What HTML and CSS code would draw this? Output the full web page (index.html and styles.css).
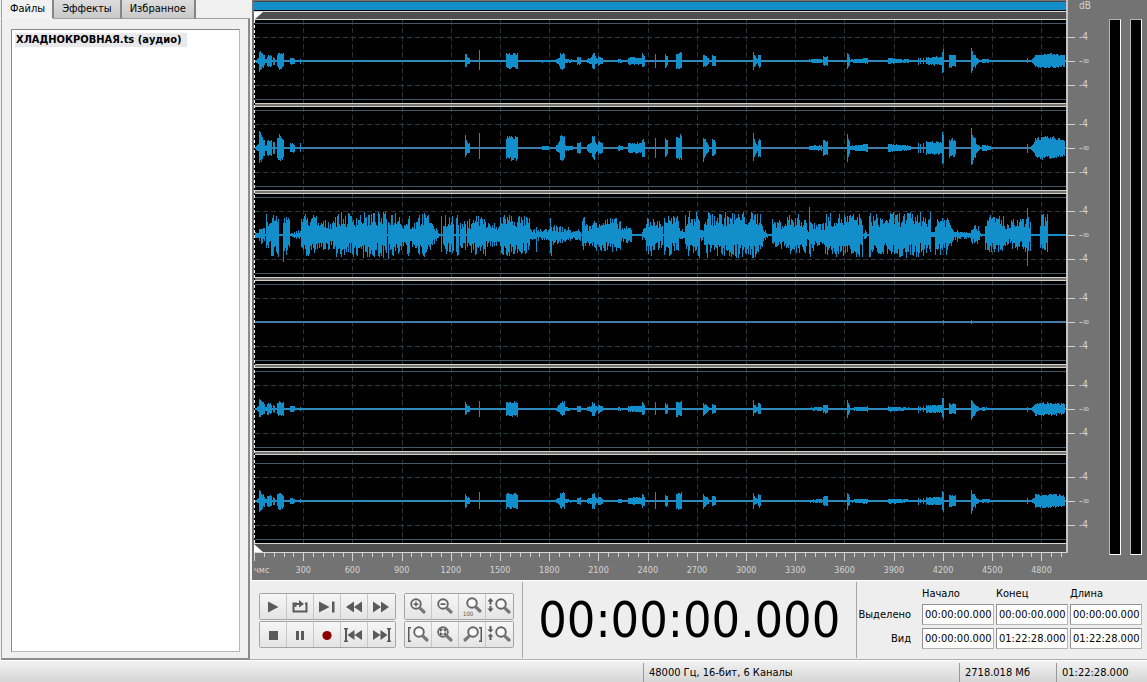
FILE: index.html
```html
<!DOCTYPE html>
<html lang="ru">
<head>
    <meta charset="utf-8">
    <title>ХЛАДНОКРОВНАЯ.ts (аудио)</title>
    <link rel="stylesheet" href="styles.css">
</head>
<body>
    <svg class="defs" width="0" height="0">
        <symbol id="lens" viewBox="0 0 24 20">
            <circle cx="10" cy="7" r="4.8" fill="#fafafa" stroke="#666" stroke-width="1.9"/>
            <path d="M13.6 10.8L18 15" stroke="#777" stroke-width="3.2" stroke-linecap="round"/>
        </symbol>
    </svg>
    <div class="workspace">
        <div class="sidebar">
            <div class="tabs">
                <button class="tab active">Файлы</button>
                <button class="tab">Эффекты</button>
                <button class="tab">Избранное</button>
            </div>
            <div class="panel">
                <ul class="files">
                    <li>ХЛАДНОКРОВНАЯ.ts (аудио)</li>
                </ul>
            </div>
        </div>

        <div class="main">
            <div class="editor">
                <div class="waves">
                    <div class="overview"></div>
                    <div class="cue top"></div>
                    <div class="channels" id="channels"></div>
                    <div class="cue bottom"></div>
                    <div class="ruler">
                        <svg id="ticks" viewBox="0 0 812 8" preserveAspectRatio="none"></svg>
                        <div class="times">
                            <span class="unit">чмс</span>
                            <span>300</span><span>600</span><span>900</span><span>1200</span>
                            <span>1500</span><span>1800</span><span>2100</span><span>2400</span>
                            <span>2700</span><span>3000</span><span>3300</span><span>3600</span>
                            <span>3900</span><span>4200</span><span>4500</span><span>4800</span>
                        </div>
                    </div>
                </div>
                <div class="scale">
                    <div class="db">dB</div>
                    <ul><li>-4</li><li>-∞</li><li>-4</li></ul>
                    <ul><li>-4</li><li>-∞</li><li>-4</li></ul>
                    <ul><li>-4</li><li>-∞</li><li>-4</li></ul>
                    <ul><li>-4</li><li>-∞</li><li>-4</li></ul>
                    <ul><li>-4</li><li>-∞</li><li>-4</li></ul>
                    <ul><li>-4</li><li>-∞</li><li>-4</li></ul>
                </div>
                <div class="meters">
                    <div class="meter"></div>
                    <div class="meter"></div>
                </div>
            </div>

            <div class="controls">
                <div class="buttons">
                    <div class="group">
                        <button aria-label="Play"><svg viewBox="0 0 24 20"><path d="M7 4.500L17.500 10L7 15.500Z"/></svg></button>
                        <button aria-label="Loop"><svg viewBox="0 0 24 20"><path d="M9 6.500H5.500V14.500H18.500V6.500H17" fill="none" stroke="#5a5a5a" stroke-width="2"/><path d="M6.500 10V6H11V3L16 7L11 10.500V8H8.500V10Z"/></svg></button>
                        <button aria-label="Play to end"><svg viewBox="0 0 24 20"><path d="M4 4.500L14.500 10L4 15.500ZM17 4.500H19.500V15.500H17Z"/></svg></button>
                        <button aria-label="Rewind"><svg viewBox="0 0 24 20"><path d="M12 4.500V15.500L4 10ZM20 4.500V15.500L12 10Z"/></svg></button>
                        <button aria-label="Forward"><svg viewBox="0 0 24 20"><path d="M4 4.500V15.500L12 10ZM12 4.500V15.500L20 10Z"/></svg></button>
                    </div>
                    <div class="group">
                        <button aria-label="Stop"><svg viewBox="0 0 24 20"><path d="M8 6H17V15H8Z"/></svg></button>
                        <button aria-label="Pause"><svg viewBox="0 0 24 20"><path d="M8 6H11V15H8ZM13 6H16V15H13Z"/></svg></button>
                        <button aria-label="Record"><svg viewBox="0 0 24 20"><circle cx="12" cy="10.500" r="4.600" fill="#8b0000"/></svg></button>
                        <button aria-label="To start"><svg viewBox="0 0 24 20"><path d="M2 3H6V4.500H5V15.500H6V17H2V15.500H3V4.500H2ZM12.500 5V15L5.500 10ZM20 5V15L12.500 10Z"/></svg></button>
                        <button aria-label="To end"><svg viewBox="0 0 24 20"><path d="M22 3H18V4.500H19V15.500H18V17H22V15.500H21V4.500H22ZM4 5V15L11.500 10ZM11.500 5V15L18.500 10Z"/></svg></button>
                    </div>
                </div>
                <div class="buttons">
                    <div class="group">
                        <button aria-label="Zoom in"><svg viewBox="0 0 24 20"><use href="#lens" width="24" height="20"/><path d="M7.500 6.500H12.500V8H7.500ZM9.300 4.500H10.700V9.500H9.300Z"/></svg></button>
                        <button aria-label="Zoom out"><svg viewBox="0 0 24 20"><use href="#lens" width="24" height="20"/><path d="M7.500 6.300H12.500V8H7.500Z"/></svg></button>
                        <button aria-label="Zoom 100"><svg viewBox="0 0 24 20"><use href="#lens" x="2" y="-1" width="24" height="20"/><text x="3" y="19" font-size="6">100</text></svg></button>
                        <button aria-label="Zoom in vertically"><svg viewBox="0 0 24 20"><use href="#lens" x="4" width="24" height="20"/><path d="M3.500 1L6.500 4.500H4.500V7.500H2.500V4.500H0.500ZM3.500 15L6.500 11.500H4.500V9H2.500V11.500H0.500Z"/></svg></button>
                    </div>
                    <div class="group">
                        <button aria-label="Zoom to left edge"><svg viewBox="0 0 24 20"><use href="#lens" x="3" width="24" height="20"/><path d="M2 2H5V3.500H3.500V15.500H5V17H2Z"/></svg></button>
                        <button aria-label="Zoom to selection"><svg viewBox="0 0 24 20"><use href="#lens" width="24" height="20"/><path d="M7 4H9.500V5.500H8.500V6.500H7ZM10.500 4H13V6.500H11.500V5.500H10.500ZM7 7.500H8.500V8.500H9.500V10H7ZM11.500 7.500H13V10H10.500V8.500H11.500Z"/></svg></button>
                        <button aria-label="Zoom to right edge"><svg viewBox="0 0 24 20"><circle cx="13" cy="7" r="4.800" fill="#fafafa" stroke="#666" stroke-width="1.900"/><path d="M9.400 10.800L5 15" stroke="#777" stroke-width="3.200" stroke-linecap="round"/><path d="M22 2H19V3.500H20.500V15.500H19V17H22Z"/></svg></button>
                        <button aria-label="Zoom out vertically"><svg viewBox="0 0 24 20"><use href="#lens" x="4" width="24" height="20"/><path d="M3.500 7.500L0.500 4.500H2.500V1H4.500V4.500H6.500ZM3.500 8.500L6.500 11.500H4.500V15H2.500V11.500H0.500Z"/></svg></button>
                    </div>
                </div>
                <div class="clock">00:00:00.000</div>
                <table class="range">
                    <tr>
                        <td></td>
                        <th id="c1">Начало</th>
                        <th id="c2">Конец</th>
                        <th id="c3">Длина</th>
                    </tr>
                    <tr>
                        <th class="row" id="r1">Выделено</th>
                        <td><input type="text" aria-labelledby="r1 c1" value="00:00:00.000"></td>
                        <td><input type="text" aria-labelledby="r1 c2" value="00:00:00.000"></td>
                        <td><input type="text" aria-labelledby="r1 c3" value="00:00:00.000"></td>
                    </tr>
                    <tr>
                        <th class="row" id="r2">Вид</th>
                        <td><input type="text" aria-labelledby="r2 c1" value="00:00:00.000"></td>
                        <td><input type="text" aria-labelledby="r2 c2" value="01:22:28.000"></td>
                        <td><input type="text" aria-labelledby="r2 c3" value="01:22:28.000"></td>
                    </tr>
                </table>
            </div>
        </div>
    </div>

    <div class="status">
        <span class="format">48000 Гц, 16-бит, 6 Каналы</span>
        <span class="size">2718.018 Мб</span>
        <span class="length">01:22:28.000</span>
    </div>
    <script src="wave.js"></script>
</body>
</html>
```
FILE: styles.css
```css
* { box-sizing: border-box }

body {
    background: #f0f0f0;
    color: #000;
    display: flex;
    flex-direction: column;
    font: 11px/14px "DejaVu Sans Condensed", "DejaVu Sans", sans-serif;
    margin: 0;
    min-height: 100vh;
}

button,
input {
    font: inherit;
    margin: 0;
    padding: 0;
}

ul {
    list-style: none;
    margin: 0;
    padding: 0;
}

.defs { position: absolute }

.workspace {
    display: flex;
    flex: 1;
}

/* left panel */
.sidebar {
    display: flex;
    flex: 0 0 250px;
    flex-direction: column;
    padding: 0 0 0 1px;
}

.tabs {
    display: flex;
    height: 19px;
    position: relative;
}

.tab {
    background: linear-gradient(#ddd, #c9c9c9);
    border: 0;
    border-bottom: 1px solid #a0a0a0;
    border-right: 2px solid #858585;
    height: 19px;
    padding: 0 8px 1px;
}

.tab.active {
    background: #f2f2f2;
    border-bottom-color: #f2f2f2;
    border-left: 1px solid #a0a0a0;
    padding-right: 7px;
}

.panel {
    border: 1px solid #a0a0a0;
    border-bottom: 2px solid #8c8c8c;
    border-right: 2px solid #8c8c8c;
    display: flex;
    flex: 1;
    margin-top: -1px;
    padding: 10px 8px 6px 9px;
}

.files {
    background: #fff;
    border: 1px solid #b8b8b8;
    border-left-color: #888;
    border-top-color: #888;
    flex: 1;
    padding: 3px 3px;
}

.files li {
    background: #e9e9ec;
    display: inline-block;
    font-weight: bold;
    padding: 0 5px 0 1px;
}

/* waveform editor */
.main {
    display: flex;
    flex: 1;
    flex-direction: column;
    margin-left: 2px;
    min-width: 0;
}

.editor {
    background: #737373;
    display: flex;
    padding-left: 2px;
}

.waves {
    flex: 1;
    min-width: 0;
}

.overview {
    background: #128fca;
    border-bottom: 1px solid #000;
    border-top: 1px solid #444;
    height: 10px;
    margin-top: 1px;
}

.cue {
    background: #4e4e4e;
    border-bottom: 1px solid #d0dcd4;
    border-top: 1px solid #d8d8d8;
}

.cue::before {
    background: #fff;
    content: "";
    display: block;
    height: 8px;
    width: 9px;
}

.cue.top { height: 9px }
.cue.top::before { clip-path: polygon(0 0, 100% 0, 0 100%) }
.cue.bottom { height: 10px }
.cue.bottom::before { clip-path: polygon(0 0, 100% 100%, 0 100%) }

.channels {
    background: #000;
    border-left: 1px dashed #fff;
}

.channels svg {
    display: block;
    height: 83px;
    width: 100%;
}

/* grey bar between two channels */
.track + .track::before {
    background: #737373;
    border-bottom: 1px solid #d0d0c8;
    border-top: 1px solid #d0d0c8;
    content: "";
    display: block;
    height: 2px;
}

.track:last-child svg {
    box-sizing: content-box;
    padding-top: 5px;
}

.ruler { color: #d4d4d4 }

.ruler svg {
    display: block;
    height: 8px;
    width: 100%;
}

.times {
    display: flex;
    font-size: 9px;
    height: 19px;
    line-height: 19px;
}

.times span {
    flex: 300 0 0;
    min-width: 0;
    text-align: center;
}

.times .unit {
    flex-grow: 150;
    text-align: left;
}

.scale {
    align-self: flex-start;
    border-left: 2px solid #c4c4c4;
    color: #d4d4d4;
    flex: 0 0 43px;
    font-size: 10px;
    padding-bottom: 6px;
}

.scale .db {
    height: 20px;
    line-height: 12px;
    padding-left: 11px;
}

.scale ul {
    height: 87px;
    padding-top: 5px;
}

.scale ul:last-child {
    height: 92px;
    padding-top: 10px;
}

.scale li {
    align-items: center;
    display: flex;
    gap: 4px;
    height: 24px;
}

.scale li::before {
    background: #d4d4d4;
    content: "";
    height: 1px;
    width: 7px;
}

.meters {
    display: flex;
    flex: 0 0 38px;
    gap: 9px;
    padding: 19px 5px 25px 0;
}

.meter {
    background: #000;
    border: 1px solid #fff;
    border-left-color: #b4b4b4;
    border-top-color: #b4b4b4;
    flex: 0 0 12px;
}

/* transport, zoom, time */
.controls {
    background: #eee;
    border-bottom: 1px solid #b0b0b0;
    border-top: 1px solid #fff;
    display: flex;
    flex: 1;
    margin-left: -2px;
    padding-left: 9px;
}

.buttons {
    display: flex;
    flex-direction: column;
    gap: 1px;
    margin: 12px 8px 0 0;
}

.group {
    border: 1px solid #a4a4a4;
    border-radius: 2px;
    display: flex;
    height: 27px;
}

.group button {
    background: linear-gradient(#f6f6f6, #e4e4e4);
    border: 0;
    border-right: 1px solid #c8c8c8;
    padding: 2px 1px;
    width: 27px;
}

.group button:last-child { border: 0 }

.group svg {
    display: block;
    fill: #5a5a5a;
    height: 20px;
    width: 24px;
}

.clock {
    border-left: 1px solid #a8a8a8;
    border-right: 1px solid #a8a8a8;
    flex: 1;
    font-size: 50px;
    line-height: 76px;
    margin: 1px 0;
    text-align: center;
}

.range {
    align-self: flex-start;
    border-spacing: 2px 3px;
    margin: 3px 3px 0 0;
}

.range th,
.range td {
    font-weight: normal;
    padding: 0;
    text-align: left;
}

.range th.row {
    padding-right: 9px;
    text-align: right;
}

.range input {
    background: #fff;
    border: 1px solid #b4b4b4;
    border-left-color: #909090;
    border-top-color: #909090;
    display: block;
    height: 21px;
    padding-left: 2px;
    width: 72px;
}

/* status bar */
.status {
    background: linear-gradient(#f2f2f2, #d6d6d6);
    border-top: 1px solid #fff;
    display: flex;
    height: 22px;
    justify-content: flex-end;
}

.status span {
    border-left: 1px solid #999;
    line-height: 20px;
    margin-top: 2px;
    padding-left: 5px;
}

.format { flex: 0 0 316px }
.size { flex: 0 0 97px }
.length { flex: 0 0 91px }
```
FILE: wave.js
```js
var NS = 'http://www.w3.org/2000/svg';
var LEFT = 255, WIDTH = 811, MID = 41;

// start, end, half height at the start, half height at the end
var speech = [
    [256,258,2,4],[259,264,15,8],[265,266,3,3],[267,271,8,8],[273,274,6,6],[277,279,9,12],[280,283,13,10],
    [290,294,5,4],[300,300,4,4],[465,466,11,9],[467,469,5,5],[479,479,14,14],[506,517,11,11],
    [542,548,2,2],[556,559,3,6],[560,564,11,12],[565,572,3,2],[577,580,5,5],[587,591,3,5],[592,594,11,11],[595,597,6,3],
    [598,602,7,4],[618,622,3,2],[628,641,5,5],[642,644,10,8],[655,655,12,12],[665,667,9,7],[676,681,12,12],
    [703,703,12,12],[704,708,9,4],[712,715,8,7],[753,753,13,13],[754,757,8,3],[758,760,9,9],[809,821,2,3],
    [823,827,7,7],[847,847,14,14],[848,849,9,7],[850,867,2,4],[888,910,4,2],[918,918,6,6],[920,920,4,4],[923,923,5,5],
    [926,942,6,6],[942,943,16,16],[949,955,9,8],[971,972,18,14],[973,975,11,9],[976,979,5,2],[982,990,3,2],
    [1027,1027,4,4],[1031,1034,2,6],[1035,1056,10,10],[1057,1064,9,8]
];
var center = [
    [255,258,3,3],[259,264,7,8],[266,268,17,17],[269,270,10,10],[271,278,18,18],[283,283,24,24],[284,289,17,16],
    [290,295,1,3],[296,300,4,4],[301,316,18,17],[317,332,12,13],[333,386,18,19],[388,397,20,20],[398,405,19,10],
    [406,409,18,18],[410,415,10,12],[416,432,19,17],[433,439,9,2],[441,441,20,20],[443,444,14,12],[445,453,18,16],
    [456,458,20,20],[460,465,10,12],[467,470,13,13],[471,485,18,17],[486,496,10,10],[497,499,5,10],[500,529,19,15],
    [530,549,5,5],[536,536,18,18],[550,551,22,18],[552,570,8,6],[571,580,4,5],[582,586,15,17],[587,592,9,9],
    [593,620,15,14],[621,631,7,7],[633,641,1,1],[642,645,5,6],[646,651,20,18],[652,662,13,13],[664,678,18,15],
    [679,684,6,5],[685,699,19,20],[700,703,6,4],[704,762,19,19],[763,767,6,3],[772,786,13,13],[787,806,17,17],
    [807,808,6,4],[809,810,23,20],[811,824,13,11],[825,862,18,18],[864,866,5,3],[869,885,19,15],[886,930,19,19],
    [931,934,3,3],[935,946,17,17],[947,952,16,8],[953,970,4,3],[957,957,10,10],[971,979,10,7],[980,984,2,1],
    [985,1003,16,18],[1004,1010,9,9],[1011,1030,13,15],[1027,1027,25,20],[1040,1047,18,18]
];

var channels = [
    { bursts: speech, gain: 0.7, line: '#2d8abc' },
    { bursts: speech, gain: 1.05, line: '#3f7ca8' },
    { bursts: center, gain: 1, line: '#128fca' },
    { bursts: [[943,943,2,2],[971,971,2,2]], gain: 1, line: '#3f7ca8' },
    { bursts: speech, gain: 0.64, line: '#2d8abc' },
    { bursts: speech, gain: 0.68, line: '#2d8abc' }
];

var seed = 7;
function noise() {
    seed = (seed * 16807) % 2147483647;
    return seed / 2147483647;
}

function path(svg, d, color, dash) {
    var p = document.createElementNS(NS, 'path');
    p.setAttribute('d', d);
    p.setAttribute('stroke', color);
    p.setAttribute('fill', 'none');
    p.setAttribute('shape-rendering', 'crispEdges');
    if (dash) {
        p.setAttribute('stroke-dasharray', dash);
    }
    svg.appendChild(p);
    return p;
}

function hline(y) {
    return 'M0 ' + (y + 0.5) + 'H' + WIDTH;
}

function drawChannel(ch) {
    var track = document.createElement('div');
    var svg = document.createElementNS(NS, 'svg');
    var d = '', i, x;
    track.className = 'track';
    svg.setAttribute('viewBox', '0 0 ' + WIDTH + ' 83');
    svg.setAttribute('preserveAspectRatio', 'none');
    for (i = 1; i <= 16; i++) {
        d += 'M' + (Math.round(i * 49.2) - 0.5) + ' 0V83';
    }
    path(svg, d, '#263636', '5 3');
    path(svg, hline(17) + hline(65), '#2b3b3b', '5 3');
    path(svg, hline(3) + hline(79), '#465868');
    path(svg, 'M0 ' + MID + 'H' + WIDTH, ch.line).setAttribute('stroke-width', 2);

    d = '';
    ch.bursts.forEach(function (b) {
        for (x = b[0]; x <= b[1]; x++) {
            var t = b[1] > b[0] ? (x - b[0]) / (b[1] - b[0]) : 0;
            var h = (b[2] + (b[3] - b[2]) * t) * ch.gain;
            var wild = ch.bursts === center ? 0.8 : 0.35;
            var up = h * (1 + wild * (noise() - 0.7));
            var down = h * (1 + wild * (noise() - 0.7));
            d += 'M' + (x - LEFT + 0.5) + ' ' + Math.round(MID - up) + 'V' + Math.round(MID + down);
        }
    });
    path(svg, d, '#128fca');
    track.appendChild(svg);
    document.getElementById('channels').appendChild(track);
}

channels.forEach(drawChannel);

var ticks = '';
for (var i = 0; i <= 82; i++) {
    ticks += 'M' + (Math.round(i * 9.84) + 0.5) + ' 0V' + (i % 5 ? 4 : 8);
}
path(document.getElementById('ticks'), ticks, '#d4d4d4');
```
